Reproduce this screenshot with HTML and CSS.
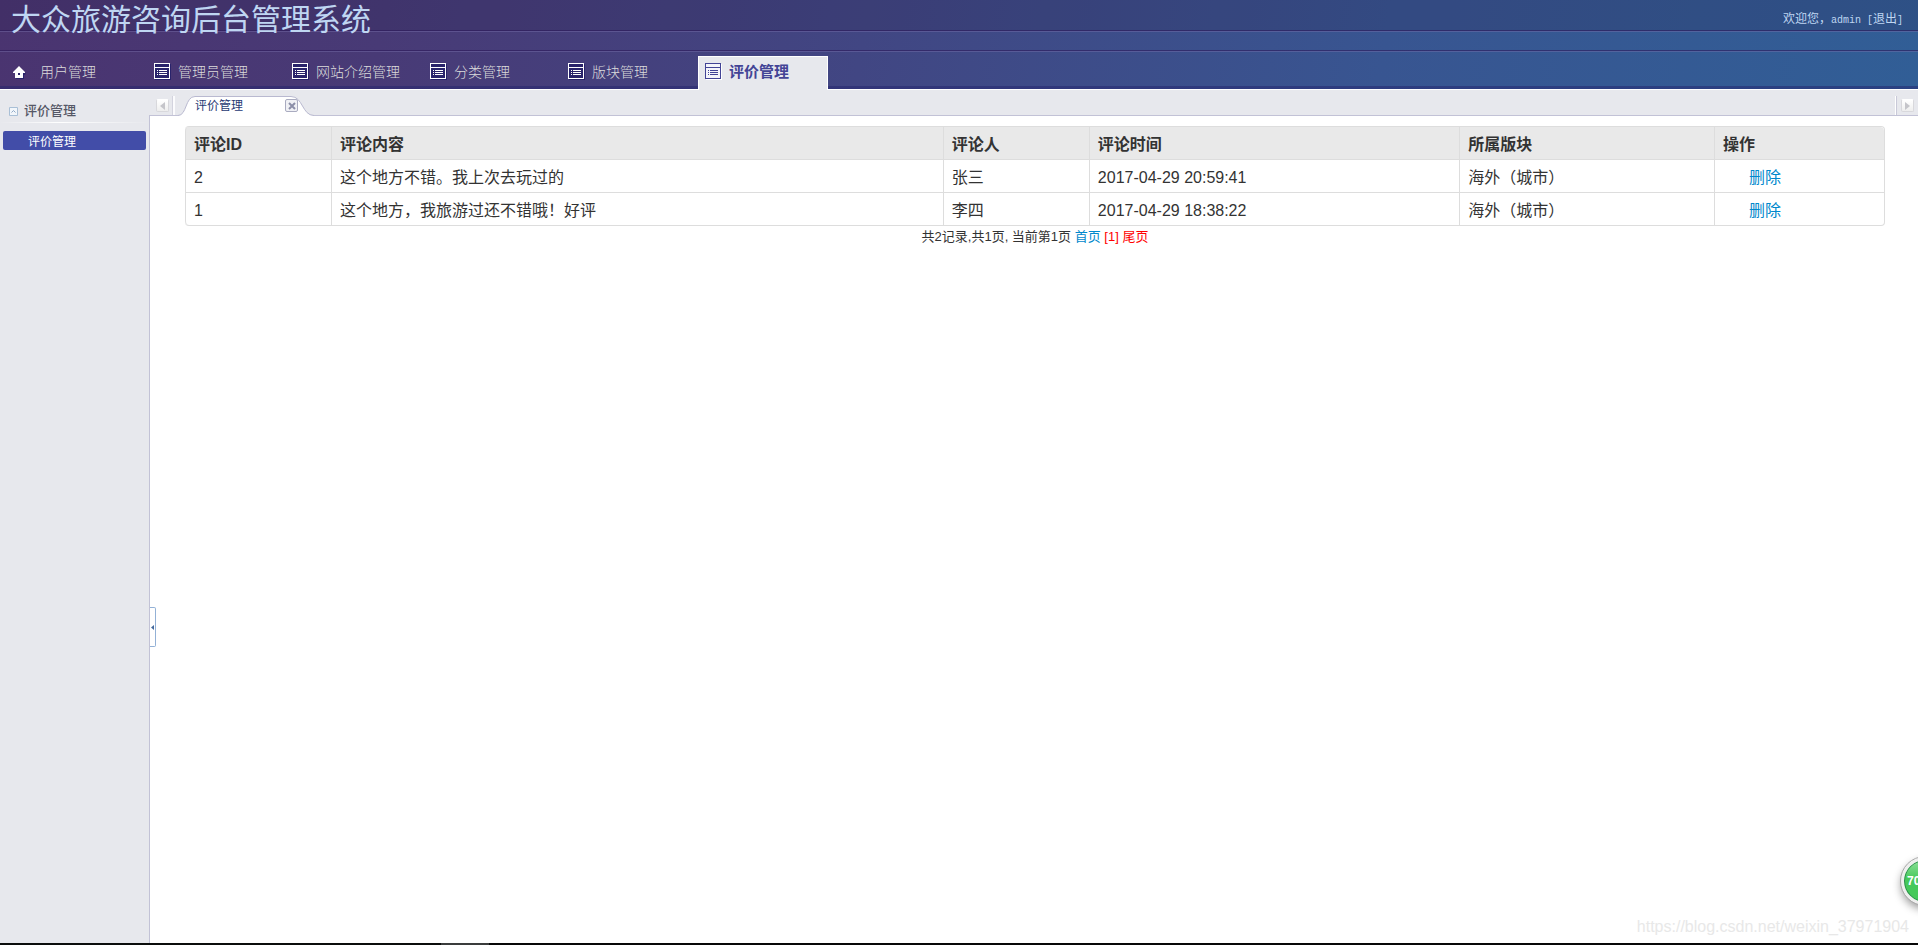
FILE: index.html
```html
<!DOCTYPE html>
<html lang="zh-CN">
<head>
<meta charset="utf-8">
<title>大众旅游咨询后台管理系统</title>
<link rel="stylesheet" href="styles.css">
</head>
<body>
<svg class="defs" aria-hidden="true">
  <symbol id="list" viewBox="0 0 17 17" shape-rendering="crispEdges">
    <path class="shade" d="M16 1h1v16H1v-1h15z"/>
    <path class="fill" d="M1 1h14v14H1z"/>
    <path class="line" d="M0 0h16v16H0zM1 1v3h14V1zM1 5v10h14V5z" fill-rule="evenodd"/>
    <path class="line" d="M3 7h1v1H3zM5 7h8v1H5zM3 9h1v1H3zM5 9h8v1H5zM3 11h1v1H3zM5 11h8v1H5z"/>
  </symbol>
</svg>
<div class="app">
  <header class="header">
    <div class="brand">
      <h1 class="title">大众旅游咨询后台管理系统</h1>
      <div class="user">欢迎您，<span class="mono">admin </span><a class="logout" href="#"><span class="mono">[</span>退出<span class="mono">]</span></a></div>
    </div>
    <div class="band"></div>
    <nav class="nav">
      <a class="nav-item nav-home" href="#"><svg class="home" viewBox="0 0 13 13" aria-hidden="true"><path class="shade" d="M7 2l6 6-2 1v4H3z"/><path class="line" d="M6 0l6 6v1h-2v5H2V7H0V6zM5 7v2h2V7z" fill-rule="evenodd"/></svg>用户管理</a>
      <a class="nav-item" href="#"><svg class="ico" aria-hidden="true"><use href="#list"/></svg>管理员管理</a>
      <a class="nav-item" href="#"><svg class="ico" aria-hidden="true"><use href="#list"/></svg>网站介绍管理</a>
      <a class="nav-item" href="#"><svg class="ico" aria-hidden="true"><use href="#list"/></svg>分类管理</a>
      <a class="nav-item" href="#"><svg class="ico" aria-hidden="true"><use href="#list"/></svg>版块管理</a>
      <a class="nav-item active" href="#"><svg class="ico" aria-hidden="true"><use href="#list"/></svg>评价管理</a>
    </nav>
  </header>
  <div class="body">
    <aside class="side">
      <h2 class="side-head"><svg class="toggle" viewBox="0 0 9 9" aria-hidden="true"><path d="M.5.5h8v8h-8z" fill="#f2f6fb" stroke="#a9bfd6"/><path d="M2.500 5.500l2-2 2 2" fill="none" stroke="#8fa9c6"/></svg>评价管理</h2>
      <a class="side-link" href="#">评价管理</a>
    </aside>
    <section class="content">
      <div class="tabs">
        <div class="pane"><button class="scroll" type="button" aria-label="向左"><svg viewBox="0 0 5 8"><path d="M5 0v8L0 4z"/></svg></button></div>
        <div class="tab">
          <svg class="tab-shape" viewBox="0 0 136 20" aria-hidden="true"><path d="M0 19.500C9 19.500 7 .5 17 .5H113C125 .5 124 19.500 136 19.500V20H0z" fill="#fff"/><path d="M0 19.500C9 19.500 7 .5 17 .5H113C125 .5 124 19.500 136 19.500" fill="none" stroke="#b9b9d0"/></svg>
          <span class="tab-text">评价管理</span>
          <button class="close" type="button" aria-label="关闭"><svg viewBox="0 0 8 8"><path d="M1 1l6 6M7 1l-6 6"/></svg></button>
        </div>
        <div class="pane pane-right"><button class="scroll" type="button" aria-label="向右"><svg viewBox="0 0 5 8"><path d="M0 0v8l5-4z"/></svg></button></div>
      </div>
      <main class="main">
        <table class="table">
          <colgroup><col class="c-id"><col class="c-text"><col class="c-id"><col class="c-time"><col class="c-area"><col></colgroup>
          <thead><tr><th>评论ID</th><th>评论内容</th><th>评论人</th><th>评论时间</th><th>所属版块</th><th>操作</th></tr></thead>
          <tbody>
            <tr><td>2</td><td>这个地方不错。我上次去玩过的</td><td>张三</td><td>2017-04-29 20:59:41</td><td>海外（城市）</td><td><a class="del" href="#">删除</a></td></tr>
            <tr><td>1</td><td>这个地方，我旅游过还不错哦！好评</td><td>李四</td><td>2017-04-29 18:38:22</td><td>海外（城市）</td><td><a class="del" href="#">删除</a></td></tr>
          </tbody>
        </table>
        <div class="pager">共2记录,共1页, 当前第1页 <a class="first" href="#">首页</a> <span class="red">[1] 尾页</span></div>
      </main>
      <button class="collapse" type="button" aria-label="收起"><svg viewBox="0 0 3 5"><path d="M3 0v5L0 2.500z"/></svg></button>
    </section>
  </div>
  <div class="taskbar"></div>
  <div class="mark">https://blog.csdn.net/weixin_37971904</div>
  <div class="ball">70</div>
</div>
</body>
</html>
```
FILE: styles.css
```css
* { box-sizing: border-box; }
body { margin: 0; font: 12px/20px "Liberation Sans", "Noto Sans CJK SC", sans-serif; color: #333; }
a { text-decoration: none; color: inherit; }
button { padding: 0; margin: 0; border: 0; background: none; }
.defs { position: absolute; width: 0; height: 0; }
.app { position: relative; display: flex; flex-direction: column; height: 100vh; overflow: hidden; }

.header { background: linear-gradient(100deg, #4a3470 0, #483a76 20%, #414683 45%, #385591 72%, #315e96 100%); border-bottom: 1px solid #fff; }
.brand { display: flex; justify-content: space-between; height: 31px; padding: 0 15px 0 11px; background: rgba(35, 30, 70, .2); border-bottom: 1px solid rgba(45, 25, 90, .6); }
.title { margin: 0; font-size: 30px; line-height: 40px; font-weight: 400; color: #bfd6f2; white-space: nowrap; }
.user { line-height: 38px; color: #bfd6f2; white-space: pre; }
.mono { font-family: "Liberation Mono", monospace; font-size: 10px; }
.band { height: 20px; border-top: 1px solid rgba(120, 110, 170, .45); border-bottom: 1px solid rgba(45, 25, 90, .6); }
.nav { display: flex; gap: 8px; height: 38px; padding: 4px 0 0 8px; border-top: 1px solid rgba(120, 110, 170, .45); box-shadow: inset 0 -3px rgba(35, 35, 110, .5); }
.nav-item { --line: #fff; --fill: #29236b; --shade: #29236b; display: flex; align-items: flex-start; gap: 7px; width: 130px; height: 34px; padding: 5px 0 0 7px; border: 1px solid transparent; font-size: 14px; font-weight: 300; line-height: 20px; color: #dcdcdc; white-space: nowrap; }
.nav-home { gap: 14px; padding-left: 4px; }
.active { --line: #434496; --fill: #f4f4fa; --shade: #fff; padding-left: 6px; background: #e7e8ed; border-color: #fff; border-bottom: 0; color: #434496; font-size: 15px; font-weight: 700; }
.ico { flex: none; width: 17px; height: 17px; margin-top: 1px; }
.home { flex: none; width: 13px; height: 13px; margin-top: 4px; }
.shade { fill: var(--shade); }
.fill { fill: var(--fill); }
.line { fill: var(--line); }

.body { display: flex; flex: 1; min-height: 0; background: #e7e8ed; }
.side { width: 149px; padding-top: 10px; }
.side-head { display: flex; align-items: center; gap: 6px; margin: 0; padding: 0 0 0 9px; height: 23px; font-size: 13px; font-weight: 500; color: #555766; border-bottom: 1px solid; border-image: linear-gradient(90deg, transparent, #fff 40%, transparent) 1; }
.toggle { width: 9px; height: 9px; }
.side-link { display: block; height: 19px; margin: 8px 3px 0; padding-left: 25px; line-height: 23px; color: #fff; background: #424da8; border-radius: 2px; }
.content { position: relative; display: flex; flex: 1; flex-direction: column; min-width: 0; }
.tabs { display: flex; height: 26px; padding-top: 6px; border-bottom: 1px solid #c2c2d6; }
.pane { display: flex; width: 26px; padding: 3px 0 0 7px; border-right: 2px solid; border-color: #fbfbfd; box-shadow: inset -1px 0 #d3d3de; }
.pane-right { width: 23px; margin-left: auto; padding-left: 5px; border-right: 0; border-left: 1px solid #fff; box-shadow: inset 1px 0 #c9c9d8; }
.scroll { display: flex; align-items: center; justify-content: center; width: 13px; height: 13px; background: linear-gradient(#fff, #eee); border: 1px solid #d8d8dc; border-top-color: #fff; border-radius: 2px; fill: #c5c5ca; }
.scroll svg { width: 5px; height: 8px; }
.tab { position: relative; display: flex; width: 136px; height: 20px; margin-left: 3px; padding-left: 17px; }
.tab-shape { position: absolute; inset: 0; width: 136px; height: 20px; }
.tab-text { position: relative; flex: 1; line-height: 21px; color: #273973; }
.close { position: relative; display: flex; align-items: center; justify-content: center; width: 13px; height: 13px; margin: 3px 16px 0 0; background: #f0f1f5; border: 1px solid #a9abc0; border-radius: 2px; }
.close svg { width: 8px; height: 8px; stroke: #8c8fa8; stroke-width: 2; }
.main { flex: 1; padding: 10px 33px 0 35px; background: #fff; border-left: 1px solid #c2c2d6; }
.table { width: 100%; table-layout: fixed; border-collapse: separate; border-spacing: 0; border: 1px solid #ddd; border-left: 0; border-radius: 4px; font-size: 16px; line-height: 24px; }
.table th, .table td { padding: 6px 8px 2px; text-align: left; border-left: 1px solid #ddd; }
.table td { border-top: 1px solid #ddd; }
.table th { background: #e9e9e9; font-weight: 700; }
.table th:first-child { border-top-left-radius: 4px; }
.table th:last-child { border-top-right-radius: 4px; }
.table tbody tr:last-child td:first-child { border-bottom-left-radius: 4px; }
.c-id { width: 8.6%; }
.c-text { width: 36%; }
.c-time { width: 21.8%; }
.c-area { width: 15%; }
.del { margin-left: 26px; color: #08c; }
.pager { font-size: 13px; line-height: 22px; text-align: center; }
.first { color: #08c; }
.red { color: #f00; }
.collapse { position: absolute; left: 1px; top: 517px; display: flex; align-items: center; justify-content: center; width: 6px; height: 40px; background: #fff; border: 1px solid #93b1d6; border-left: 0; border-radius: 0 2px 2px 0; }
.collapse svg { width: 3px; height: 5px; fill: #44699c; }
.taskbar { height: 2px; background: linear-gradient(90deg, #0b0d0c 0 23%, #3a3c3c 23% 25.500%, #080808 25.500%); }
.mark { position: absolute; right: 9px; bottom: 8px; font-size: 16px; line-height: 20px; color: #e8e8e8; }
.ball { position: absolute; right: -31px; bottom: 40px; width: 48px; height: 48px; padding-left: 3px; border: 3px solid #eee; border-radius: 50%; outline: 1px solid #aaa; background: linear-gradient(#8fe09a, #45c95a 45%); box-shadow: inset 0 0 0 1px #2b8a4c, 0 4px 8px rgba(0, 0, 0, .4); font-size: 12px; font-weight: 700; line-height: 42px; color: #fff; }
```
